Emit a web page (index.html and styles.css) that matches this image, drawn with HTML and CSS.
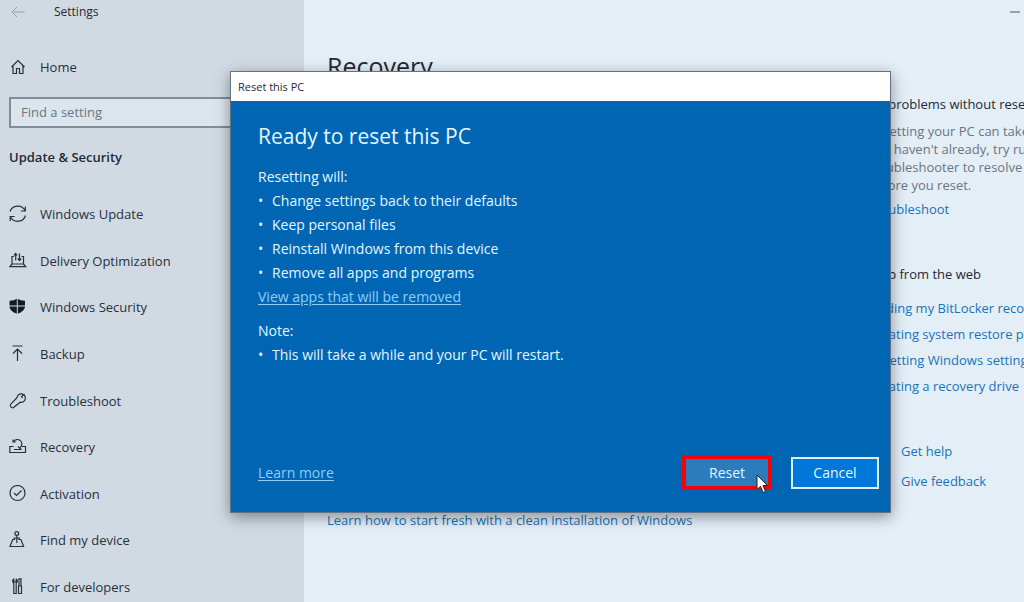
FILE: index.html
```
<!DOCTYPE html>
<html lang="en">
<head>
    <meta charset="UTF-8">
    <title>Settings</title>
    <link rel="stylesheet" href="styles.css">
</head>
<body>
    <div class="settings">
        <div class="sidebar">
            <div class="titlebar">
                <button type="button" class="back" aria-label="Back">
                    <svg viewBox="0 0 14 12"><path d="M13.500 6H1M6 1L1 6l5 5"/></svg>
                </button>
                <span>Settings</span>
            </div>
            <a href="#" class="nav-item home">
                <svg class="icon" viewBox="0 0 18 18"><path d="M2.500 9L9 2.500 15.500 9M4 8v7.500h3.500v-5h3v5H14V8"/></svg>
                Home
            </a>
            <input type="search" class="search" placeholder="Find a setting" aria-label="Find a setting">
            <h2>Update &amp; Security</h2>
            <ul class="nav">
                <li><a href="#" class="nav-item">
                    <svg class="icon" viewBox="0 0 18 18"><path d="M1 6.500A8 7.500 0 0 1 16 5.500M16.300 1.500v4.500h-4.500M16.500 10.500A8 7.500 0 0 1 1.500 12M1.200 16v-4.500h4.500"/></svg>
                    Windows Update
                </a></li>
                <li><a href="#" class="nav-item">
                    <svg class="icon" viewBox="0 0 18 18"><path d="M5 4.500H3v7.500h11.500V4.500h-2M3 12L.8 14.700h15.900L14.500 12M6.700 8.500V1.500M5 3.500l1.700-2 1.600 2M10.500 1.500v7M8.800 6.500l1.700 2 1.700-2"/></svg>
                    Delivery Optimization
                </a></li>
                <li><a href="#" class="nav-item">
                    <svg class="icon solid" viewBox="0 0 18 18"><path d="M7.800.8v6.700H.5V2.800C3.500 2.700 6 2 7.800.8zM8.800.8c1.700 1.200 4 1.900 7.200 2v4.700H8.800zM.5 8.500h7.300v7.300C3.500 14 .7 12 .5 8.500zM8.800 8.500H16c-.2 3.500-3 5.500-7.200 7.300z"/></svg>
                    Windows Security
                </a></li>
                <li><a href="#" class="nav-item">
                    <svg class="icon" viewBox="0 0 18 18"><path d="M3.500 1h10M8.500 16V4.500M4 8.500L8.500 4 13 8.500"/></svg>
                    Backup
                </a></li>
                <li><a href="#" class="nav-item">
                    <svg class="icon" viewBox="0 0 18 18"><path d="M8.500 6.500a4.200 4.200 0 1 1 3.200 4.500L6 15.500a2.200 2.200 0 0 1-4-.5c-.5-1 0-1.800.5-2.300z" transform="translate(-.5 -.8)"/><path d="M15.500 2l-3 2.500 1 1.500"/></svg>
                    Troubleshoot
                </a></li>
                <li><a href="#" class="nav-item">
                    <svg class="icon" viewBox="0 0 18 18"><path d="M4.500 8.500H.8v6h15.700v-6h-3.700M4 1.500V4h2.800M4.500 3.700A4.500 4.500 0 1 1 11.200 9.500M5 11.500h7.500M12.300 11.500L9 8.500"/></svg>
                    Recovery
                </a></li>
                <li><a href="#" class="nav-item">
                    <svg class="icon" viewBox="0 0 18 18"><circle cx="8.500" cy="8" r="7.500"/><path d="M5 8l2.500 2.500 5-5"/></svg>
                    Activation
                </a></li>
                <li><a href="#" class="nav-item">
                    <svg class="icon" viewBox="0 0 18 18"><circle cx="7.800" cy="2.500" r="1.900"/><path d="M7.800 4.500V12M4.500 7h6.600M5.500 7v1.500H3.700L1 15.500h13.600l-2.700-7H10V7"/></svg>
                    Find my device
                </a></li>
                <li><a href="#" class="nav-item">
                    <svg class="icon" viewBox="0 0 18 18"><path d="M4.800.8v3h2.400v-3M4.800.8c-1.500 1-1.500 3.500 0 4.500V15.500h2.400V5.300c1.500-1 1.500-3.500 0-4.500M10 .8h2V8h-2zM9 8h4M9.500 8v7.500h3V8"/></svg>
                    For developers
                </a></li>
            </ul>
        </div>

        <div class="main">
            <h1>Recovery</h1>
            <a href="#" class="fresh-start">Learn how to start fresh with a clean installation of Windows</a>
        </div>

        <div class="related">
            <button type="button" class="minimize" aria-label="Minimize"></button>
            <h3>Fix problems without resetting your PC</h3>
            <p>Resetting your PC can take a while. If<br>
            you haven't already, try running a<br>
            troubleshooter to resolve issues<br>
            before you reset.</p>
            <a href="#">Troubleshoot</a>
            <h3 class="web-help">Help from the web</h3>
            <ul class="web-links">
                <li><a href="#">Finding my BitLocker recovery key</a></li>
                <li><a href="#">Creating system restore point</a></li>
                <li><a href="#">Resetting Windows settings</a></li>
                <li><a href="#">Creating a recovery drive</a></li>
            </ul>
            <ul class="support">
                <li><a href="#">Get help</a></li>
                <li><a href="#">Give feedback</a></li>
            </ul>
        </div>
    </div>

    <div class="dialog" role="dialog" aria-labelledby="dialog-title">
        <div class="dialog-title" id="dialog-title">Reset this PC</div>
        <div class="dialog-body">
            <h2>Ready to reset this PC</h2>
            <p>Resetting will:</p>
            <ul>
                <li>Change settings back to their defaults</li>
                <li>Keep personal files</li>
                <li>Reinstall Windows from this device</li>
                <li>Remove all apps and programs</li>
            </ul>
            <a href="#">View apps that will be removed</a>
            <p class="note">Note:</p>
            <ul>
                <li>This will take a while and your PC will restart.</li>
            </ul>
            <div class="dialog-actions">
                <a href="#">Learn more</a>
                <div class="highlight">
                    <button type="button" class="reset">Reset</button>
                    <svg class="cursor" viewBox="0 0 12 20"><path d="M1 1v14.500l3.500-3 2.500 6 2.500-1-2.500-6h4.500z"/></svg>
                </div>
                <button type="button" class="cancel">Cancel</button>
            </div>
        </div>
    </div>
</body>
</html>
```
FILE: styles.css
```
* {
    box-sizing: border-box;
}

body {
    margin: 0;
    font-family: "Open Sans", "Noto Sans", sans-serif;
    font-size: 13px;
    line-height: 18px;
    color: #1f2a35;
    overflow: hidden;
}

h1, h2, h3, p, ul {
    margin: 0;
    padding: 0;
    font-weight: normal;
}

h3 {
    font-size: 13px;
}

ul {
    list-style: none;
}

a {
    color: #1a73b8;
    text-decoration: none;
}

button {
    font-family: inherit;
    padding: 0;
}

.settings {
    display: grid;
    grid-template-columns: 304px 1fr 156px;
    height: 100vh;
    background-color: #e4eef7;
    white-space: nowrap;
}

/* Sidebar */
.sidebar {
    display: flex;
    flex-direction: column;
    background-color: #d1dae2;
    padding-left: 9px;
}

.titlebar {
    display: flex;
    align-items: center;
    gap: 29px;
    height: 24px;
    font-size: 12px;
}

.back {
    width: 16px;
    height: 16px;
    border: none;
    background: none;
}

.back svg {
    display: block;
    width: 14px;
    height: 12px;
    margin-left: 2px;
    fill: none;
    stroke: #98a0a8;
}

.nav-item {
    display: flex;
    align-items: center;
    gap: 13px;
    height: 30px;
    color: #26313c;
}

.home {
    margin-top: 28px;
}

.icon {
    width: 18px;
    height: 18px;
    fill: none;
    stroke: #26313c;
    stroke-width: 1.2;
}

.solid {
    fill: #101c28;
    stroke: none;
}

.search {
    flex-shrink: 0;
    height: 31px;
    margin: 15px 14px 0 0;
    padding: 0 10px 2px;
    border: 2px solid #848d95;
    border-radius: 0;
    background-color: #dbe5ee;
    font-family: inherit;
    font-size: 13px;
}

.search::placeholder {
    color: #6c757e;
}

.sidebar h2 {
    margin: 20px 0 33px;
    font-size: 13px;
    font-weight: 600;
}

.nav {
    flex: 1;
    display: flex;
    flex-direction: column;
    justify-content: space-between;
}

/* Page content */
.main {
    display: flex;
    flex-direction: column;
    justify-content: space-between;
    padding: 48px 0 73px 23px;
}

.main h1 {
    font-size: 25px;
    line-height: 36px;
}

.related {
    overflow: hidden;
}

.minimize {
    display: block;
    width: 10px;
    height: 2px;
    margin: 11px 4px 82px auto;
    border: none;
    background-color: #98a0a8;
}

.related p {
    margin: 9px 0 6px;
    color: #6c757e;
}

.web-help {
    margin-top: 47px;
}

.web-links {
    margin-top: 12px;
    line-height: 26px;
}

.support {
    margin-top: 37px;
    padding-left: 33px;
    line-height: 30px;
}

/* Dialog */
.dialog {
    position: absolute;
    top: 71px;
    right: 133px;
    bottom: 89px;
    left: 230px;
    display: flex;
    flex-direction: column;
    border: 1px solid #5f7488;
    background-color: #0066b4;
    box-shadow: 0 4px 14px rgba(0, 0, 0, 0.4);
    color: #e3f6ff;
    font-size: 14px;
    line-height: 24px;
}

.dialog-title {
    height: 29px;
    padding-left: 7px;
    background-color: #fff;
    color: #1f2a35;
    font-size: 11px;
    line-height: 29px;
}

.dialog-body {
    flex: 1;
    display: flex;
    flex-direction: column;
    align-items: flex-start;
    padding: 19px 11px 22px 27px;
}

.dialog h2 {
    margin-bottom: 13px;
    font-size: 21px;
    line-height: 32px;
}

.dialog li::before {
    content: "•";
    display: inline-block;
    width: 14px;
}

.dialog a {
    color: #8fcdf5;
    text-decoration: underline;
    text-underline-offset: 2px;
}

.note {
    margin-top: 10px;
}

.dialog-actions {
    display: flex;
    align-items: center;
    align-self: stretch;
    margin-top: auto;
}

.highlight {
    position: relative;
    margin: 0 19px 0 auto;
    border: 4px solid #fb0007;
}

.reset,
.cancel {
    display: block;
    color: #e3f6ff;
    font-size: 14px;
}

.reset {
    width: 82px;
    height: 27px;
    border: none;
    background-color: #2c7cbc;
}

.cancel {
    width: 88px;
    height: 32px;
    border: 2px solid #d5f0ff;
    background-color: #0077d9;
}

.cursor {
    position: absolute;
    top: 15px;
    left: 70px;
    width: 12px;
    height: 20px;
    fill: #fff;
    stroke: #14243a;
}
```
